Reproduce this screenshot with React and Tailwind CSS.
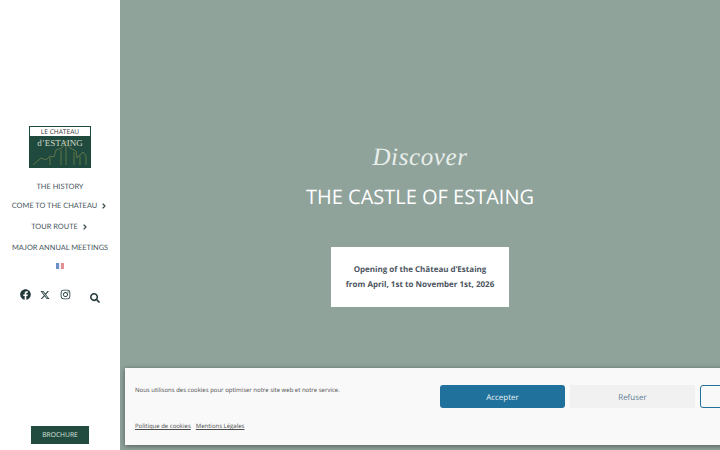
import React from "react";
import { FaFacebook, FaInstagram, FaSearch } from "react-icons/fa";
import { FaXTwitter } from "react-icons/fa6";
import { ChevronRight } from "lucide-react";

const sans = { fontFamily: '"Open Sans", sans-serif' };

function NavItem({ children, chevron, className = "" }) {
  return (
    <div className={`flex items-center justify-center gap-[3px] font-['Lato'] text-[7.4px] leading-[12px] text-[#45555a] whitespace-nowrap ${className}`}>
      <span>{children}</span>
      {chevron && <ChevronRight size={8} strokeWidth={3.5} className="text-[#33444a]" />}
    </div>
  );
}

function Logo() {
  return (
    <div className="w-[62px] h-[42px] bg-[#1f4a3d] border border-[#1f4a3d] flex flex-col">
      <div className="h-[9px] pt-[1px] bg-white flex items-center justify-center text-[6.6px] leading-none text-[#333] whitespace-nowrap">LE CHATEAU</div>
      <div className="relative flex-1 overflow-hidden">
        <div className="text-center text-[9px] leading-[13px] mt-[1px] text-[#cfd8c8] font-['Liberation_Serif'] whitespace-nowrap">d’ESTAING</div>
        <svg viewBox="0 0 60 31" className="absolute inset-0 w-full h-full" fill="none" stroke="#a8a65a" strokeWidth="0.6" opacity="0.8">
          <path d="M3 29 L11 22 L16 24 L20 20 L24 21 L26 14 L32 12 L36 5 L40 12 L46 15 L47 22 L53 16 L56 20 L56 29" />
          <path d="M20 29 V21 M31 29 V14 M36 29 V10 M44 29 V16 M50 29 V20" />
        </svg>
      </div>
    </div>
  );
}

export default function App() {
  return (
    <div style={sans} className="relative w-[720px] h-[450px] overflow-hidden flex bg-[#8fa39b] [text-rendering:geometricPrecision]">
      <aside className="w-[120px] h-full bg-white flex flex-col items-center pt-[126px] pb-[6px] shrink-0">
        <Logo />
        <NavItem className="mt-[13px]">THE HISTORY</NavItem>
        <NavItem chevron className="mt-[7px]">COME TO THE CHATEAU</NavItem>
        <NavItem chevron className="mt-[9px]">TOUR ROUTE</NavItem>
        <NavItem className="mt-[9px]">MAJOR ANNUAL MEETINGS</NavItem>
        <svg width="8" height="6" viewBox="0 0 8 6" className="mt-[9px]">
          <rect width="3" height="6" fill="#6d8fc9" />
          <rect x="3" width="2" height="6" fill="#eef0f4" />
          <rect x="5" width="3" height="6" fill="#e58f95" />
        </svg>
        <div className="mt-[20px] w-full flex items-start pl-[20px] text-[#24393a]">
          <FaFacebook size={11} />
          <FaXTwitter size={10} className="ml-[9px] mt-[1px]" />
          <FaInstagram size={11} className="ml-[10px]" />
          <FaSearch size={10} className="ml-[19px] mt-[4px]" />
        </div>
        <div className="mt-auto w-[58px] h-[18px] bg-[#224b40] flex items-center justify-center text-[6.7px] text-[#d9e3df]">BROCHURE</div>
      </aside>

      <main className="flex-1 flex flex-col items-center pt-[142px]">
        <div className="font-['Liberation_Serif'] italic text-[25px] leading-[32px] tracking-[0.6px] text-[#e9eeeb]">Discover</div>
        <h1 className="mt-[6px] text-[20px] leading-[34px] text-white whitespace-nowrap">THE CASTLE OF ESTAING</h1>
        <div className="mt-[33px] w-[178px] h-[60px] bg-white flex flex-col items-center justify-center text-[8px] leading-[15px] font-bold text-[#4d5562] whitespace-nowrap">
          <div>Opening of the Château d’Estaing</div>
          <div>from April, 1st to November 1st, 2026</div>
        </div>
      </main>

      <div className="absolute left-[125px] top-[368px] w-[640px] h-[77px] bg-[#f9f9f9] shadow-[0_1px_5px_rgba(0,0,0,0.45)] text-[#4c4c4c] text-[6px]">
        <div className="flex h-full">
          <div className="w-[315px] pl-[10px] flex flex-col shrink-0">
            <div className="mt-[17px] leading-[10px] whitespace-nowrap">Nous utilisons des cookies pour optimiser notre site web et notre service.</div>
            <div className="mt-[26px] flex gap-[5px] leading-[10px] whitespace-nowrap">
              <span className="underline">Politique de cookies</span>
              <span className="underline">Mentions Légales</span>
            </div>
          </div>
          <div className="flex gap-[5px] pt-[17px] text-[8px]">
            <div className="w-[125px] h-[23px] pt-[2px] rounded-[3px] bg-[#20729c] text-[#e8f1f5] flex items-center justify-center">Accepter</div>
            <div className="w-[125px] h-[23px] pt-[2px] bg-[#f1f1f1] text-[#5f7f94] flex items-center justify-center">Refuser</div>
            <div className="w-[125px] h-[23px] rounded-[3px] border border-[#20729c] bg-transparent" />
          </div>
        </div>
      </div>
    </div>
  );
}
